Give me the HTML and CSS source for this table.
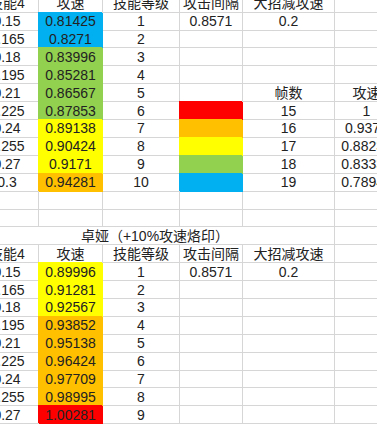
FILE: index.html
```html
<!DOCTYPE html>
<html lang="zh-CN">
<head>
<meta charset="utf-8">
<title>攻速表</title>
<link rel="stylesheet" href="styles.css">
</head>
<body>
<div class="sheet">
  <div class="c">技能4</div><div class="c">攻速</div><div class="c">技能等级</div><div class="c">攻击间隔</div><div class="c">大招减攻速</div><div class="c"></div>
  <div class="c">0.15</div><div class="c blue">0.81425</div><div class="c">1</div><div class="c">0.8571</div><div class="c">0.2</div><div class="c"></div>
  <div class="c">0.165</div><div class="c blue">0.8271</div><div class="c">2</div><div class="c"></div><div class="c"></div><div class="c"></div>
  <div class="c">0.18</div><div class="c green">0.83996</div><div class="c">3</div><div class="c"></div><div class="c"></div><div class="c"></div>
  <div class="c">0.195</div><div class="c green">0.85281</div><div class="c">4</div><div class="c"></div><div class="c"></div><div class="c"></div>
  <div class="c">0.21</div><div class="c green">0.86567</div><div class="c">5</div><div class="c"></div><div class="c">帧数</div><div class="c">攻速</div>
  <div class="c">0.225</div><div class="c green">0.87853</div><div class="c">6</div><div class="c red"></div><div class="c">15</div><div class="c">1</div>
  <div class="c">0.24</div><div class="c yellow">0.89138</div><div class="c">7</div><div class="c orange"></div><div class="c">16</div><div class="c">0.9375</div>
  <div class="c">0.255</div><div class="c yellow">0.90424</div><div class="c">8</div><div class="c yellow"></div><div class="c">17</div><div class="c">0.88235</div>
  <div class="c">0.27</div><div class="c yellow">0.9171</div><div class="c">9</div><div class="c green"></div><div class="c">18</div><div class="c">0.83333</div>
  <div class="c">0.3</div><div class="c orange">0.94281</div><div class="c">10</div><div class="c blue"></div><div class="c">19</div><div class="c">0.78947</div>
  <div class="c"></div><div class="c"></div><div class="c"></div><div class="c"></div><div class="c"></div><div class="c"></div>
  <div class="c"></div><div class="c"></div><div class="c"></div><div class="c"></div><div class="c"></div><div class="c"></div>
  <div class="c title">卓娅（+10%攻速烙印）</div><div class="c"></div>
  <div class="c">技能4</div><div class="c">攻速</div><div class="c">技能等级</div><div class="c">攻击间隔</div><div class="c">大招减攻速</div><div class="c"></div>
  <div class="c">0.15</div><div class="c yellow">0.89996</div><div class="c">1</div><div class="c">0.8571</div><div class="c">0.2</div><div class="c"></div>
  <div class="c">0.165</div><div class="c yellow">0.91281</div><div class="c">2</div><div class="c"></div><div class="c"></div><div class="c"></div>
  <div class="c">0.18</div><div class="c yellow">0.92567</div><div class="c">3</div><div class="c"></div><div class="c"></div><div class="c"></div>
  <div class="c">0.195</div><div class="c orange">0.93852</div><div class="c">4</div><div class="c"></div><div class="c"></div><div class="c"></div>
  <div class="c">0.21</div><div class="c orange">0.95138</div><div class="c">5</div><div class="c"></div><div class="c"></div><div class="c"></div>
  <div class="c">0.225</div><div class="c orange">0.96424</div><div class="c">6</div><div class="c"></div><div class="c"></div><div class="c"></div>
  <div class="c">0.24</div><div class="c orange">0.97709</div><div class="c">7</div><div class="c"></div><div class="c"></div><div class="c"></div>
  <div class="c">0.255</div><div class="c orange">0.98995</div><div class="c">8</div><div class="c"></div><div class="c"></div><div class="c"></div>
  <div class="c">0.27</div><div class="c red">1.00281</div><div class="c">9</div><div class="c"></div><div class="c"></div><div class="c"></div>
</div>
</body>
</html>
```

FILE: styles.css
```css
html, body {
  margin: 0;
  padding: 0;
  background: #ffffff;
  overflow: hidden;
  width: 377px;
  height: 425px;
}

.sheet {
  display: grid;
  grid-template-columns: 63px 64px 77px 63px 92px 64px;
  grid-template-rows: repeat(24, 17.9px);
  margin-left: -24px;
  margin-top: -5.2px;
  width: 423px;
  font-family: "Liberation Sans", "Noto Sans CJK SC", sans-serif;
  font-size: 14px;
  color: #222222;
}

.c {
  box-sizing: border-box;
  border-right: 1px solid #d6d6d6;
  border-bottom: 1px solid #d6d6d6;
  display: flex;
  align-items: center;
  justify-content: center;
  white-space: nowrap;
  overflow: hidden;
  line-height: 1;
}

.title {
  grid-column: 1 / 6;
  overflow: visible;
}

.blue   { background: #00b0f0; border-color: #00b0f0; box-shadow: -1px -1px 0 #00b0f0; }
.green  { background: #92d050; border-color: #92d050; box-shadow: -1px -1px 0 #92d050; }
.yellow { background: #ffff00; border-color: #ffff00; box-shadow: -1px -1px 0 #ffff00; }
.orange { background: #ffc000; border-color: #ffc000; box-shadow: -1px -1px 0 #ffc000; }
.red    { background: #ff0000; border-color: #ff0000; box-shadow: -1px -1px 0 #ff0000; }
```
